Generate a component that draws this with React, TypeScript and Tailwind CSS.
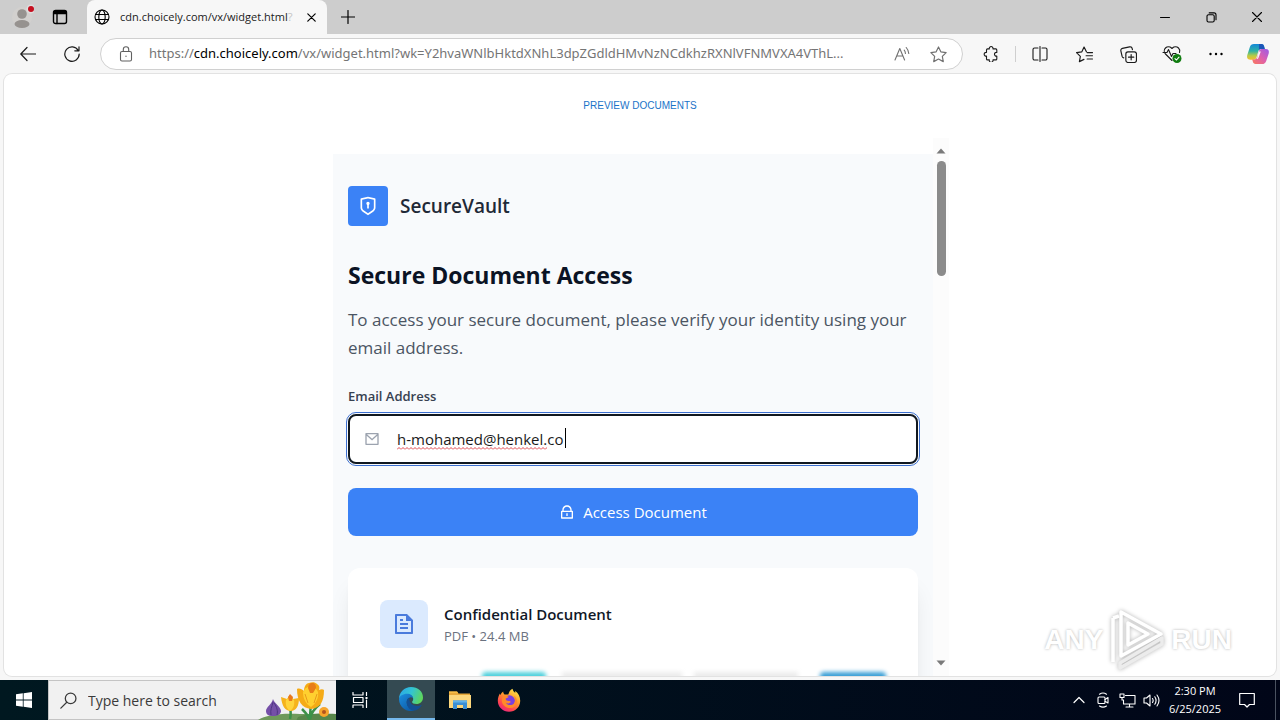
import { useState } from 'react'
import type { ReactNode } from 'react'
import {
  RiFileTextLine,
  RiLockLine,
  RiMailLine,
  RiShieldKeyholeLine,
} from 'react-icons/ri'

interface IconButtonProps {
  label: string
  className?: string
  children: ReactNode
}

function IconButton({ label, className = 'w-11 h-8', children }: IconButtonProps) {
  return (
    <button
      type="button"
      aria-label={label}
      className={`${className} shrink-0 flex items-center justify-center`}
    >
      {children}
    </button>
  )
}

interface LineIconProps {
  size?: number
  box?: number
  width?: number
  children: ReactNode
}

// Thin stroked icon, drawn on a square grid
function LineIcon({ size = 16, box = 16, width = 1.1, children }: LineIconProps) {
  return (
    <svg
      width={size}
      height={size}
      viewBox={`0 0 ${box} ${box}`}
      fill="none"
      stroke="currentColor"
      strokeWidth={width}
      strokeLinecap="round"
      strokeLinejoin="round"
      className="shrink-0"
      aria-hidden="true"
    >
      {children}
    </svg>
  )
}

function CopilotLogo() {
  return (
    <svg width="24" height="24" viewBox="0 0 24 24" aria-hidden="true">
      <defs>
        <linearGradient id="cp-a" x1="0" y1="0" x2="0" y2="1">
          <stop offset="0" stopColor="#1487d8" />
          <stop offset="0.45" stopColor="#2fb3a5" />
          <stop offset="0.75" stopColor="#b8cc45" />
          <stop offset="1" stopColor="#f5bd31" />
        </linearGradient>
        <linearGradient id="cp-b" x1="1" y1="0" x2="0" y2="1">
          <stop offset="0" stopColor="#9a5be8" />
          <stop offset="0.5" stopColor="#dd5fae" />
          <stop offset="1" stopColor="#fb7a5b" />
        </linearGradient>
      </defs>
      <path
        d="M8 2h7.500c1.400 0 2.100.9 2.500 2.100L18.800 7h-3.600c-1.700 0-2.400.8-2.900 2.400l-1.600 5.300c-.6 2-1.400 3-3.100 3H4.300C1.500 17.700.6 15.600 1.300 13L3.800 5.300C4.500 3.100 5.800 2 8 2z"
        fill="url(#cp-a)"
      />
      <path d="M13 2h2.500c1.400 0 2.100.9 2.500 2.100L18.800 7h-3.600c-1.100 0-1.800.4-2.300 1.100z" fill="#1c56b8" />
      <path
        d="M16 22H9.500c-1.500 0-2.200-.9-2.600-2.200L6.200 17.500h2c1.700 0 2.400-.9 2.900-2.500l1.500-5c.6-2 1.400-3 3.100-3h4c2.800 0 3.700 2 3 4.600l-2.500 7.300C19.600 20.900 18.200 22 16 22z"
        fill="url(#cp-b)"
      />
      <path d="M12.600 9.600h2.200l-2.300 6.100c-.3.8-.8 1.300-1.600 1.500z" fill="#f7f7f7" />
    </svg>
  )
}

function EdgeLogo() {
  return (
    <svg width="26" height="26" viewBox="0 0 26 26" aria-hidden="true">
      <defs>
        <linearGradient id="eg-a" x1="0" y1="0.2" x2="1" y2="0.5">
          <stop offset="0" stopColor="#2aa7e8" />
          <stop offset="0.5" stopColor="#33c4d2" />
          <stop offset="1" stopColor="#5ed65b" />
        </linearGradient>
        <linearGradient id="eg-b" x1="0" y1="0" x2="0.8" y2="1">
          <stop offset="0" stopColor="#1c8fe0" />
          <stop offset="1" stopColor="#0c59a4" />
        </linearGradient>
      </defs>
      <path
        d="M1 13C1 6 6.400 1 13 1c7 0 12 4.700 12 10.400 0 3.900-2.900 6.600-6.500 6.600-2.800 0-4.400-1-4.400-2 0-.7 1.100-1.200 1.100-3 0-2.400-2.300-4.300-5-4.300C5.600 8.700 2 10.300 1 13z"
        fill="url(#eg-a)"
      />
      <path
        d="M1 13c.4-3 4-5.300 8-5.300 3.500 0 6 2 6.200 4.600-1-.8-2-1.100-3-.9-2.400.4-3.700 2.500-3.500 5 .3 4.200 4 7.500 8 8.100A12 12 0 0 1 1 13z"
        fill="url(#eg-b)"
      />
      <path
        d="M8.700 16.400c0-2.200.9-4 2.600-4.800-.4 3.800 2 8.300 7.200 8.300 2 0 3.500-.5 4.500-1 .5-.2.800.1.500.6-1.800 3-4.600 4.900-7.500 5.100-4-.5-7.300-4-7.300-8.200z"
        fill="#134f93"
      />
    </svg>
  )
}

function ExplorerLogo() {
  return (
    <svg width="24" height="22" viewBox="0 0 24 22" aria-hidden="true">
      <path d="M1 2.500h8l1.500 2H22V19H1z" fill="#e8a93a" />
      <path d="M1 6h22v13H1z" fill="#fcd77c" />
      <path d="M1 2.500h8l1.200 1.600H1z" fill="#f8bd45" />
      <path d="M5 11.500h14V20h-4v-4H9v4H5z" fill="#3b8fd4" />
      <path d="M5 11.500h14v2H5z" fill="#62b3ea" />
    </svg>
  )
}

function FirefoxLogo() {
  return (
    <svg width="24" height="24" viewBox="0 0 24 24" aria-hidden="true">
      <defs>
        <linearGradient id="ff-a" x1="0.8" y1="0" x2="0.2" y2="1">
          <stop offset="0" stopColor="#ffe94d" />
          <stop offset="0.4" stopColor="#ff9a2b" />
          <stop offset="0.75" stopColor="#ff4251" />
          <stop offset="1" stopColor="#e32488" />
        </linearGradient>
      </defs>
      <path
        d="M15.500.8c.4 2 1.400 3 2.800 4.200-.2-.9-.1-1.500 0-2 2.900 2 4.900 5.600 4.900 9.600A11.200 11.200 0 0 1 .8 12.700C.8 9.500 2 6.600 3 5.400c0 .6.100 1.200.4 1.700C4 5.500 5 4.200 6.200 3.400c0 1.300.6 2.500 1.400 3.100h3.700C12 4 13.200 2 15.500.8z"
        fill="url(#ff-a)"
      />
      <circle cx="12.500" cy="12.700" r="5.400" fill="#7a3fe0" />
      <path
        d="M5.800 8.400c2.100-1.100 4.600-.6 6 .7-.9.500-1.900 1.300-3 1.500-.4 1.300.9 2.500 3 2.500 1.800 0 2.200.8 1.600 1.500-1 1.100-3 1-4.400.2 1.200 2.600 5.600 3.300 8 .6 1.800-2.100 1.500-5.400-.5-7.400 4.400 1.400 4.700 8.500.4 11.100-4.500 2.600-11.800-.5-12-6.200 0-1.800.3-3.400.9-4.500z"
        fill="#ff8a2a"
      />
    </svg>
  )
}

// Crocuses shown at the right end of the search box
function SearchHighlight() {
  return (
    <svg width="78" height="40" viewBox="0 0 78 40" aria-hidden="true">
      <path d="M0 40c8-5 22-7 42-6 17 0 29 1 36 0v6z" fill="#6f9a5b" />
      <path d="M40 37c8-4 26-4 38-3v7H38z" fill="#58874a" />
      <path d="M15 19c1 4 8 8 8 12 0 3-3 5-8 5s-7-2-7-5c0-4 6-7 7-12z" fill="#7550a8" />
      <path d="M15 22c-1 5-3 8-2 13M16 23c3 4 4 8 3 12" stroke="#4d3682" fill="none" />
      <path d="M32 39c1-4 1-7 0-12M51 40c2-7 2-11 1-18M44 29c3 3 6 6 7 10M62 24c-5 4-9 9-10 15" stroke="#3c9148" strokeWidth="2.500" fill="none" />
      <path d="M23 17l6 2 3-4 3 4 6-1c0 8-3 13-8 13-6 0-9-5-10-14z" fill="#f5b31c" />
      <path d="M28 20l4-5 4 5c1 5-1 9-4 11-3-2-5-6-4-11z" fill="#ffd43b" />
      <path d="M30 17l2-3 3 3-1 4h-3z" fill="#e9791b" />
      <path d="M39 9c2-1 5 0 7 2 0-4 2-8 5-8 3-1 6-1 8 1 2 1 3 3 2 6 2-1 4-1 5 0 0 12-4 18-13 19-9-1-14-8-14-20z" fill="#f5ab16" />
      <path d="M45 12c1-3 4-5 7-6 4 1 7 3 8 6 1 7-3 12-7 15-5-3-8-8-8-15z" fill="#ffd02f" />
      <path d="M50 8c0-3 2-5 4-5 3 0 4 2 4 5l-3 5h-3z" fill="#e87d17" />
      <path d="M47 14l3 9M59 14l-3 9" stroke="#e89a1c" fill="none" />
      <circle cx="66" cy="32" r="5" fill="#f6a52c" />
      <circle cx="66" cy="32" r="2" fill="#b3541e" />
    </svg>
  )
}

function TabStrip() {
  return (
    <header className="h-[34px] shrink-0 flex items-stretch bg-[#cdcdcd]">
      <IconButton label="Profile" className="w-11 h-8">
        <svg width="24" height="26" viewBox="0 0 24 26" aria-hidden="true">
          <circle cx="12" cy="14" r="10" fill="#d2d0ce" />
          <circle cx="12" cy="11" r="4.800" fill="#96928f" />
          <ellipse cx="12" cy="21" rx="7.500" ry="4" fill="#96928f" />
          <circle cx="21" cy="6" r="4.500" fill="#dedede" />
          <circle cx="21" cy="6" r="3" fill="#c50f1f" />
        </svg>
      </IconButton>
      <IconButton label="Tab actions" className="w-8 h-[34px]">
        <LineIcon width={1.400}>
          <rect x="1.500" y="1.500" width="13" height="13" rx="2" />
          <path d="M1.800 3.200h12.400M5 5v9.500" />
          <path d="M2 2.500h12v2H2z" fill="currentColor" />
        </LineIcon>
      </IconButton>
      <div className="w-[240px] ml-[11px] rounded-t-lg bg-[#f7f7f7] flex items-center pl-[7px] pr-2">
        <LineIcon>
          <circle cx="8" cy="8" r="7" />
          <ellipse cx="8" cy="8" rx="3.200" ry="7" />
          <path d="M1.500 5.500h13M1.500 10.500h13" />
        </LineIcon>
        <span className="ml-[10px] flex-1 whitespace-nowrap text-[11px] text-[#1b1b1b]">
          cdn.choicely.com/vx/widget.html<span className="text-[#c4c4c4]">?</span>
        </span>
        <IconButton label="Close tab" className="w-4 h-4 ml-1">
          <LineIcon size={9} box={9} width={1.200}>
            <path d="M.8.800l7.400 7.400M8.200.8L.8 8.200" />
          </LineIcon>
        </IconButton>
      </div>
      <IconButton label="New tab" className="w-[42px] h-[34px]">
        <LineIcon size={14} box={14} width={1.200}>
          <path d="M7 .500v13M.5 7h13" />
        </LineIcon>
      </IconButton>
      <div className="ml-auto flex">
        <IconButton label="Minimize" className="w-[46px] h-[34px]">
          <LineIcon size={10} box={10} width={1}>
            <path d="M.500 5.500h9" />
          </LineIcon>
        </IconButton>
        <IconButton label="Restore" className="w-[46px] h-[34px]">
          <LineIcon size={11} box={11} width={1.100}>
            <rect x="1" y="2.800" width="7.200" height="7.200" rx="1.500" />
            <path d="M3.200.900h4.800a2 2 0 0 1 2 2v4.800" />
          </LineIcon>
        </IconButton>
        <IconButton label="Close" className="w-[46px] h-[34px]">
          <LineIcon size={10} box={10} width={1.100}>
            <path d="M.500.500l9 9M9.500.500l-9 9" />
          </LineIcon>
        </IconButton>
      </div>
    </header>
  )
}

function Toolbar() {
  return (
    <nav className="h-10 shrink-0 flex items-center bg-[#f7f7f7] text-[#1b1b1b] pl-1.5 pr-0.5">
      <IconButton label="Back">
        <LineIcon width={1.200}>
          <path d="M15.500 8H.8M7 1.500L.8 8 7 14.500" />
        </LineIcon>
      </IconButton>
      <IconButton label="Refresh">
        <LineIcon width={1.200}>
          <path d="M14.300 4.600A7.200 7.200 0 1 0 15.200 8M15 .8v4h-4.200" />
        </LineIcon>
      </IconButton>
      <div className="h-8 min-w-0 flex-1 ml-1.5 rounded-full border border-[#d0d0d0] bg-white flex items-center pl-[17px] pr-2">
        <LineIcon>
          <g stroke="#616161">
            <rect x="2.500" y="5.500" width="11" height="9.500" rx="1.500" />
            <path d="M5.300 5.500V3.400a2.700 2.700 0 0 1 5.400 0v2.100" />
          </g>
          <circle cx="8" cy="10.200" r=".7" fill="#616161" stroke="none" />
        </LineIcon>
        <a
          href="#"
          className="ml-[15px] min-w-0 truncate text-[13px] text-[#757575] font-['Noto_Sans','Open_Sans',sans-serif]"
        >
          https://<span className="text-black">cdn.choicely.com</span>
          /vx/widget.html?wk=Y2hvaWNlbHktdXNhL3dpZGdldHMvNzNCdkhzRXNlVFNMVXA4VThL...
        </a>
        <div className="ml-auto flex text-[#707070]">
          <IconButton label="Read aloud" className="w-10 h-8">
            <LineIcon>
              <path d="M1 14L5.800 2.500 10.600 14M2.700 10h6.200M10.200 4.200c.9 1 1.200 2 1.200 3.200M12.200 1.500c1.800 2 2.500 3.800 2.600 6" />
            </LineIcon>
          </IconButton>
          <IconButton label="Add to favorites" className="w-8 h-8">
            <LineIcon size={17}>
              <path d="M8 .9l2.200 4.600 5 .7-3.600 3.500.9 5L8 12.300l-4.500 2.400.9-5L.8 6.200l5-.7z" />
            </LineIcon>
          </IconButton>
        </div>
      </div>
      <IconButton label="Extensions" className="w-[52px] h-8 pl-1">
        <LineIcon>
          <path d="M5 2.900h1.300a1.900 1.900 0 1 1 3.700 0h2.800a1 1 0 0 1 1 1v2.500a1.900 1.900 0 1 0 0 3.700v2.800a1 1 0 0 1-1 1h-2.800a1.900 1.900 0 1 1-3.700 0H4.500a1 1 0 0 1-1-1v-2.800a1.900 1.900 0 1 1 0-3.700V3.900a1 1 0 0 1 1-1z" />
        </LineIcon>
      </IconButton>
      <span className="w-px h-4 bg-[#cfcfcf] mr-0.5" />
      <IconButton label="Split screen">
        <LineIcon>
          <path d="M8 .500v15M6 2H2.500A1.500 1.500 0 0 0 1 3.500v9A1.500 1.500 0 0 0 2.500 14H6M10 2h3.500A1.500 1.500 0 0 1 15 3.500v9a1.500 1.500 0 0 1-1.500 1.500H10" />
        </LineIcon>
      </IconButton>
      <IconButton label="Favorites">
        <LineIcon size={17}>
          <path d="M9.800 5.400L7.600 1 5.500 5.500l-5 .7 3.600 3.500-.9 5L7.500 12.600M10.500 6.200h5M9.500 9.200h6M10.500 12.200h5" />
        </LineIcon>
      </IconButton>
      <IconButton label="Collections">
        <LineIcon size={17}>
          <rect x="5.500" y="5.500" width="10" height="10" rx="2" />
          <path d="M10.500 8v5M8 10.500h5M3.500 11.200A2 2 0 0 1 2 9.800L.8 4.600a2 2 0 0 1 1.500-2.400L9 .8a2 2 0 0 1 2.400 1.500l.3 1.200" />
        </LineIcon>
      </IconButton>
      <IconButton label="Browser essentials">
        <LineIcon size={20} box={20}>
          <path d="M10 16.500L3.500 10a4.300 4.300 0 0 1 0-6 4.200 4.200 0 0 1 6 0l.5.500.5-.5a4.200 4.200 0 0 1 6 0 4.300 4.300 0 0 1 1 4.500M1 8.500h4l1.500-3 3 7 1.500-3h3" />
          <circle cx="15" cy="14.500" r="4.500" fill="#107c10" stroke="none" />
          <path d="M13 14.600l1.500 1.400 2.500-2.800" stroke="#fff" />
        </LineIcon>
      </IconButton>
      <IconButton label="Settings and more">
        <svg width="16" height="16" viewBox="0 0 16 16" aria-hidden="true">
          <circle cx="2.500" cy="8" r="1.200" />
          <circle cx="8" cy="8" r="1.200" />
          <circle cx="13.500" cy="8" r="1.200" />
        </svg>
      </IconButton>
      <IconButton label="Copilot" className="w-10 h-8">
        <CopilotLogo />
      </IconButton>
    </nav>
  )
}

function DocumentCard() {
  return (
    <section className="mt-8 rounded-xl bg-white p-8 shadow-xl">
      <div className="flex items-center gap-4">
        <div className="size-12 rounded-lg bg-[#dbeafe] flex items-center justify-center text-[#4a7bdc]">
          <RiFileTextLine size={24} />
        </div>
        <div>
          <h3 className="text-[15px] leading-6 font-semibold text-[#111827]">Confidential Document</h3>
          <p className="text-[13px] leading-5 text-[#6b7280]">PDF • 24.4 MB</p>
        </div>
      </div>
      {/* Blurred top of the page preview */}
      <div className="mt-6 flex h-40 blur-[2px]">
        <div className="ml-[102px] w-16 rounded-t bg-[#4fd0dc]" />
        <div className="ml-4 w-[120px] bg-[#ececec]" />
        <div className="ml-3 w-[104px] bg-[#ececec]" />
        <div className="ml-auto w-[66px] rounded-t bg-[#3a9fd6]" />
      </div>
    </section>
  )
}

function AccessForm() {
  const [email, setEmail] = useState('h-mohamed@henkel.co')

  return (
    <form onSubmit={e => e.preventDefault()}>
      <label htmlFor="email" className="block mt-6 text-[13px] leading-5 font-semibold text-[#374151]">
        Email Address
      </label>
      <div className="relative mt-2">
        <RiMailLine size={16} className="absolute left-4 top-[17px] text-[#9ca3af]" />
        <input
          id="email"
          type="text"
          value={email}
          onChange={e => setEmail(e.target.value)}
          className="block w-full h-[50px] rounded-lg border-2 border-[#101820] bg-white pl-[47px] pr-4 text-[15px] text-[#1b1b1b] outline-1 outline-[#3b6fd0] outline-offset-1"
        />
        {/* Spelling mark and caret */}
        <svg className="absolute left-[49px] top-8" width="150" height="5" aria-hidden="true">
          <defs>
            <pattern id="squiggle" width="4" height="5" patternUnits="userSpaceOnUse">
              <path d="M0 3.500L2 1.500 4 3.500" fill="none" stroke="#e0444c" />
            </pattern>
          </defs>
          <rect width="150" height="5" fill="url(#squiggle)" />
        </svg>
        <span className="absolute left-[217px] top-[14px] w-px h-5 bg-black" />
      </div>
      <button
        type="submit"
        className="mt-6 w-full h-12 rounded-lg bg-[#3b82f6] text-white text-[15px] flex items-center justify-center gap-2"
      >
        <RiLockLine size={16} />
        Access Document
      </button>
    </form>
  )
}

function WatermarkLogo() {
  return (
    <div
      aria-hidden="true"
      className="absolute right-11 bottom-1 flex items-center gap-1 text-[28px] leading-none font-bold text-white font-['Liberation_Sans',sans-serif] text-shadow-[0_0_3px_#b4b4b4]"
    >
      <span>ANY</span>
      <svg
        width="60"
        height="64"
        viewBox="0 0 60 64"
        fill="none"
        stroke="#fff"
        strokeWidth="3.500"
        strokeLinejoin="round"
        className="drop-shadow-[0_0_2px_#b0b0b0]"
      >
        <path d="M6 10v44M6 10l6-2" />
        <path d="M14 4v44l40-22z" />
        <path d="M21 15v22l20-11z" />
        <path d="M13 55v5l42-24v-6z" stroke="#ececec" />
      </svg>
      <span>RUN</span>
    </div>
  )
}

function PageContent() {
  return (
    <main className="relative flex-1 min-h-0 mx-1 mb-1 rounded-lg bg-white ring-1 ring-[#e2e2e2] overflow-hidden flex flex-col items-center">
      <a href="#" className="mt-6 text-[10px] leading-4 text-[#1a73c8] font-['Liberation_Sans',sans-serif]">
        PREVIEW DOCUMENTS
      </a>
      <div className="mt-6 ml-[2px] w-full max-w-[616px] flex-1 min-h-0 flex">
        <div className="flex-1 min-w-0 overflow-hidden pt-4">
          <div className="bg-[#f8fafc] px-[15px] pt-8">
            <div className="flex items-center gap-3">
              <div className="size-10 rounded bg-[#3b82f6] flex items-center justify-center text-white">
                <RiShieldKeyholeLine size={20} />
              </div>
              <span className="text-[19px] leading-7 font-semibold text-[#1f2937]">SecureVault</span>
            </div>
            <h1 className="mt-8 text-[23px] leading-[34px] font-bold text-[#0b1324]">Secure Document Access</h1>
            <p className="mt-[14px] text-[17px] leading-7 text-[#4b5563]">
              To access your secure document, please verify your identity using your email address.
            </p>
            <AccessForm />
            <DocumentCard />
          </div>
        </div>
        {/* Scroll bar of the embedded document */}
        <div className="w-4 shrink-0 bg-[#fcfcfc] flex flex-col items-center pt-[10px] pb-[10px]">
          <svg width="10" height="6" viewBox="0 0 10 6" fill="#7a7a7a" aria-hidden="true">
            <path d="M.500 5.500L5 .500l4.500 5z" />
          </svg>
          <div className="mt-[7px] h-[115px] w-[9px] rounded-full bg-[#8b8b8b]" />
          <svg className="mt-auto" width="10" height="6" viewBox="0 0 10 6" fill="#7a7a7a" aria-hidden="true">
            <path d="M.500.500h9L5 5.500z" />
          </svg>
        </div>
      </div>
      <WatermarkLogo />
    </main>
  )
}

function Taskbar() {
  return (
    <footer className="h-10 shrink-0 flex items-stretch text-white bg-linear-to-r from-[#001820] to-[#010618]">
      <IconButton label="Start" className="w-12 h-10">
        <svg width="16" height="16" viewBox="0 0 16 16" fill="#fff" aria-hidden="true">
          <path d="M0 2.200L6.800 1.300v6.300H0zM7.600 1.200L16 0v7.600H7.600zM0 8.400h6.800v6.300L0 13.800zM7.600 8.400H16V16l-8.400-1.200z" />
        </svg>
      </IconButton>
      <div className="w-72 flex items-center bg-[#f1f1f1] border border-r-0 border-[#c4c4c4] pl-[11px] text-[#3a3a3a]">
        <LineIcon size={17} width={1.200}>
          <circle cx="10" cy="6" r="5" />
          <path d="M6.400 9.600L.8 15.200" />
        </LineIcon>
        <input
          type="text"
          aria-label="Search"
          placeholder="Type here to search"
          className="min-w-0 flex-1 ml-[11px] bg-transparent text-[14px] placeholder:text-[#3a3a3a] outline-none"
        />
        <SearchHighlight />
      </div>
      <IconButton label="Task view" className="w-[51px] h-10 pr-1">
        <LineIcon width={1.200}>
          <path d="M1 .500v2.500h10V.500M1 15.500V13h10v2.500M1.500 5.500h9.500v5H1.500zM14.500.500v3M14.500 8v7.500" />
          <rect x="13.500" y="5" width="2" height="2" fill="currentColor" stroke="none" />
        </LineIcon>
      </IconButton>
      <IconButton label="Microsoft Edge" className="w-12 h-10 bg-[#344a52] border-b-2 border-[#76b9ed]">
        <EdgeLogo />
      </IconButton>
      <IconButton label="File Explorer" className="w-[49px] h-10">
        <ExplorerLogo />
      </IconButton>
      <IconButton label="Firefox" className="w-[49px] h-10">
        <FirefoxLogo />
      </IconButton>
      <div className="ml-auto flex items-center">
        <IconButton label="Show hidden icons" className="w-6 h-10">
          <LineIcon size={12} box={12} width={1.200}>
            <path d="M1 8.500l5-5 5 5" />
          </LineIcon>
        </IconButton>
        <IconButton label="Meet now" className="w-6 h-10">
          <LineIcon>
            <rect x="3" y="5" width="7" height="6.500" rx="1" />
            <path d="M10 7.500L13 5.500v5.500L10 9.300M4.500 2.200c2-1.300 5-1.300 7 0M4.500 14c2 1.300 5 1.300 7 0" />
          </LineIcon>
        </IconButton>
        <IconButton label="Network" className="w-6 h-10">
          <LineIcon size={17} box={17}>
            <path d="M6.500 3.500H16v8.500H4.500V8M10.500 12v3M7 15h7M1 2h4v3.500H1zM3 5.500V8h1.500" />
          </LineIcon>
        </IconButton>
        <IconButton label="Volume" className="w-6 h-10">
          <LineIcon size={17} box={17}>
            <path d="M1 6v5h2.500L7 14V3L3.500 6zM9.500 6.500c.8 1.200.8 2.800 0 4M11.800 4.800c1.500 2.200 1.500 5.200 0 7.400M14 3c2.400 3.300 2.400 7.700 0 11" />
          </LineIcon>
        </IconButton>
        <button type="button" className="w-16 text-center text-[11px] leading-[18px]">
          <span className="block">2:30 PM</span>
          <span className="block">6/25/2025</span>
        </button>
        <IconButton label="Notifications" className="w-10 h-10">
          <LineIcon width={1.200}>
            <path d="M.700 1.500h14.600v11H10.500L8 15l-2.500-2.500H.7z" />
          </LineIcon>
        </IconButton>
        <span className="w-px h-10 ml-2 mr-1 bg-[#4a5260]" />
      </div>
    </footer>
  )
}

export default function App() {
  return (
    <div className="h-screen flex flex-col overflow-hidden bg-[#f7f7f7] font-['Open_Sans','Noto_Sans',sans-serif]">
      <TabStrip />
      <Toolbar />
      <PageContent />
      <Taskbar />
    </div>
  )
}
